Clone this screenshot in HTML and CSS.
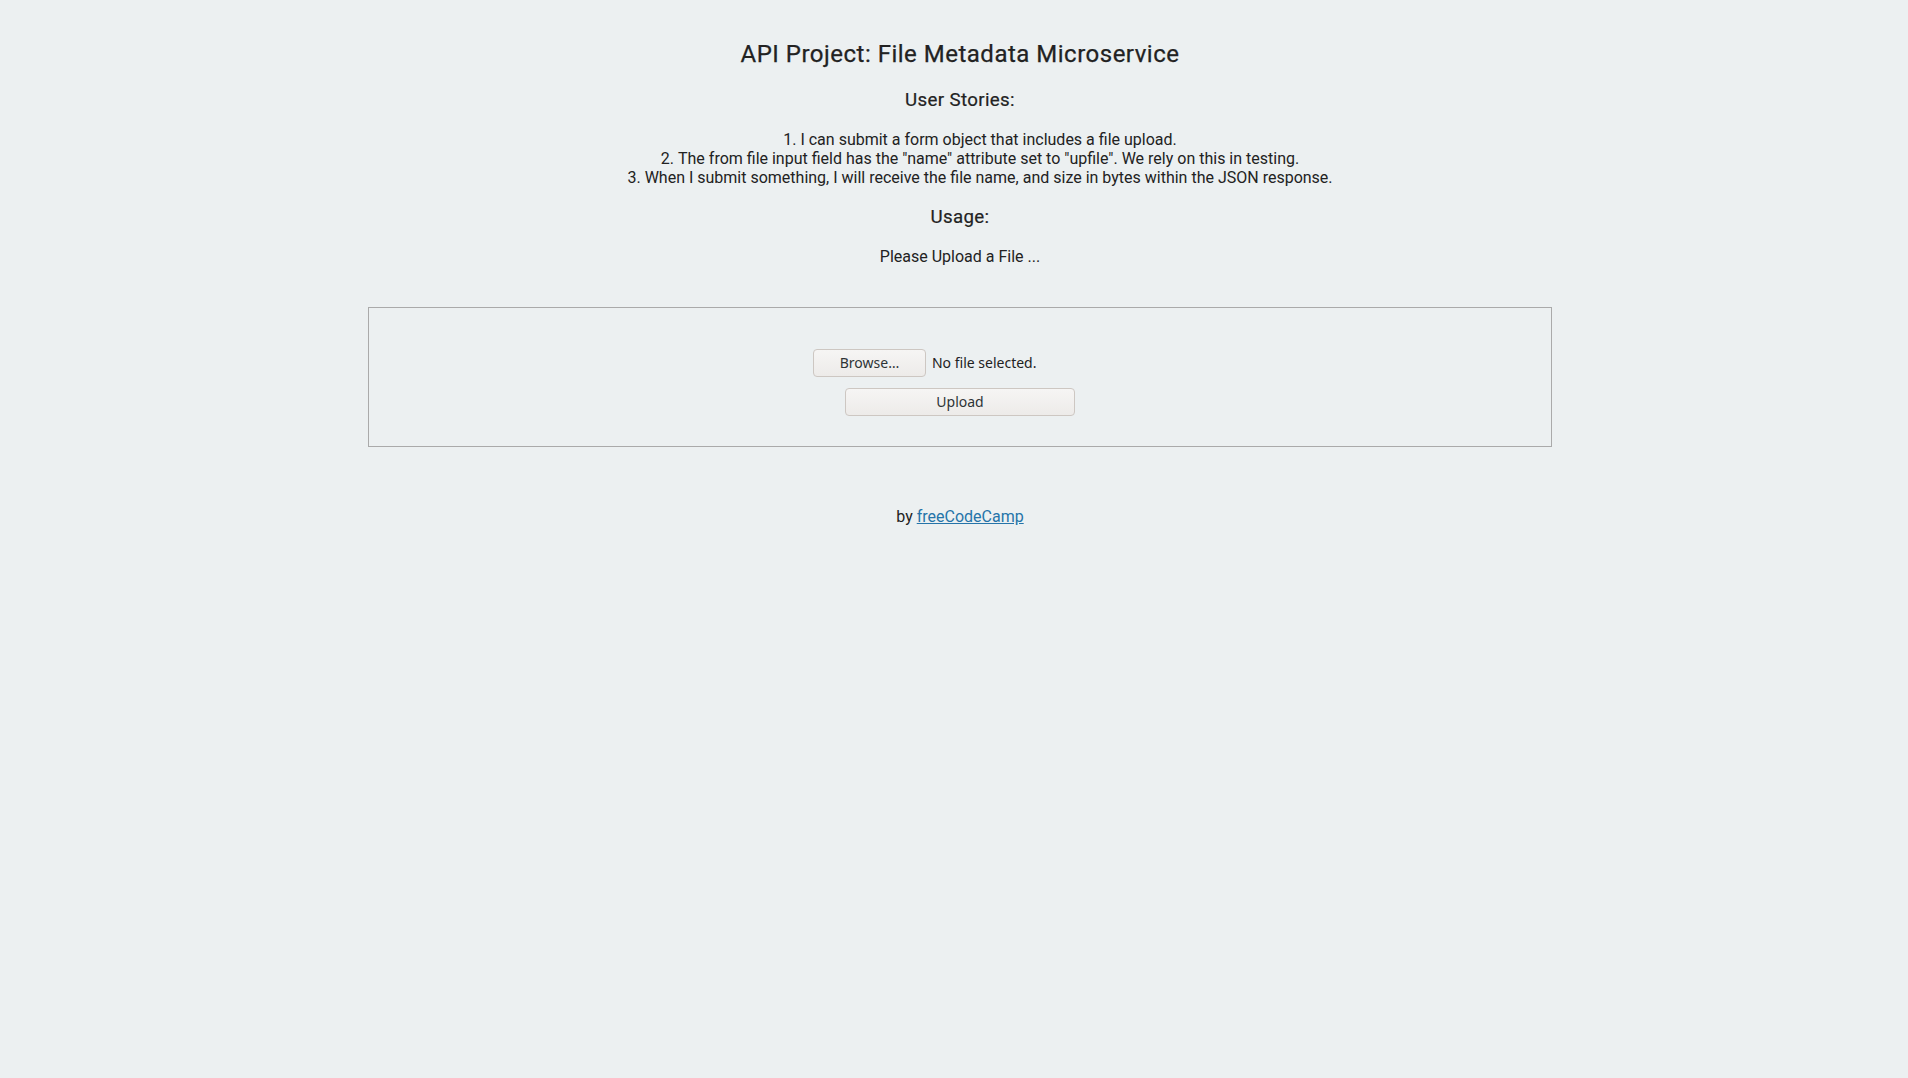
FILE: index.html
```html
<!DOCTYPE html>
<html>
<head>
<meta charset="utf-8">
<title>File Metadata</title>
<link rel="stylesheet" href="styles.css">
</head>
<body>
  <div class="container">
    <h2>API Project: File Metadata Microservice</h2>
    <h3>User Stories:</h3>
    <ol class="user-stories">
      <li>I can submit a form object that includes a file upload.</li>
      <li>The from file input field has the "name" attribute set to "upfile". We rely on this in testing.</li>
      <li>When I submit something, I will receive the file name, and size in bytes within the JSON response.</li>
    </ol>
    <h3>Usage:</h3>
    <p>Please Upload a File ...</p>
    <div class="view">
      <h4 class="output"></h4>
      <form class="upload-form">
        <div class="file-input">
          <button type="button" class="btn browse">Browse…</button>
          <span class="file-label">No file selected.</span>
        </div>
        <button type="button" class="btn submit">Upload</button>
      </form>
    </div>
  </div>
  <div class="footer">
    <p>by <a href="#">freeCodeCamp</a></p>
  </div>
</body>
</html>
```
FILE: styles.css
```css
html {
  overflow: hidden;
}

body {
  margin: 0 -4px 8px 8px;
  background-color: #ECF0F1;
  font-family: Roboto, "Liberation Sans", sans-serif;
  font-size: 16px;
  line-height: 1.2;
  text-align: center;
  color: #222;
}

.container {
  padding-top: 40px;
}

h2 {
  font-size: 24px;
  font-weight: 400;
  letter-spacing: 0.5px;
  -webkit-text-stroke: 0.25px #222;
  margin: 0 0 19.92px 0;
}

h3 {
  font-size: 18.72px;
  font-weight: 400;
  letter-spacing: 0.35px;
  -webkit-text-stroke: 0.2px #222;
  margin: 18.72px 0;
}

.user-stories {
  list-style-position: inside;
  padding-left: 40px;
  margin: 16px 0;
}

.user-stories li {
  margin: 0;
}

p {
  margin: 16px 0;
}

a {
  color: #2574A9;
}

.view {
  width: 60%;
  margin: 40px auto 0 auto;
  padding: 20px;
  border: 1px solid #aaa;
}

.output {
  margin: 21.28px 0;
}

.upload-form {
  display: flex;
  flex-direction: column;
  align-items: center;
  margin: 0;
}

.file-input {
  width: 294px;
  height: 29px;
  display: flex;
  align-items: flex-start;
  gap: 6px;
  margin-bottom: 10px;
  font-family: "Noto Sans", "DejaVu Sans", sans-serif;
  font-size: 14px;
  color: #222;
}

.file-label {
  line-height: 28px;
}

.btn {
  box-sizing: border-box;
  height: 28px;
  padding: 0 8px;
  border: 1px solid #cdc7c2;
  border-radius: 4px;
  background: linear-gradient(#f6f5f4, #edebe9);
  font-family: "Noto Sans", "DejaVu Sans", sans-serif;
  font-size: 14px;
  color: #2e3436;
  line-height: 26px;
}

.browse {
  width: 113px;
}

.submit {
  width: 230px;
  margin-bottom: 10px;
}

.footer {
  margin-top: 60px;
}
```
